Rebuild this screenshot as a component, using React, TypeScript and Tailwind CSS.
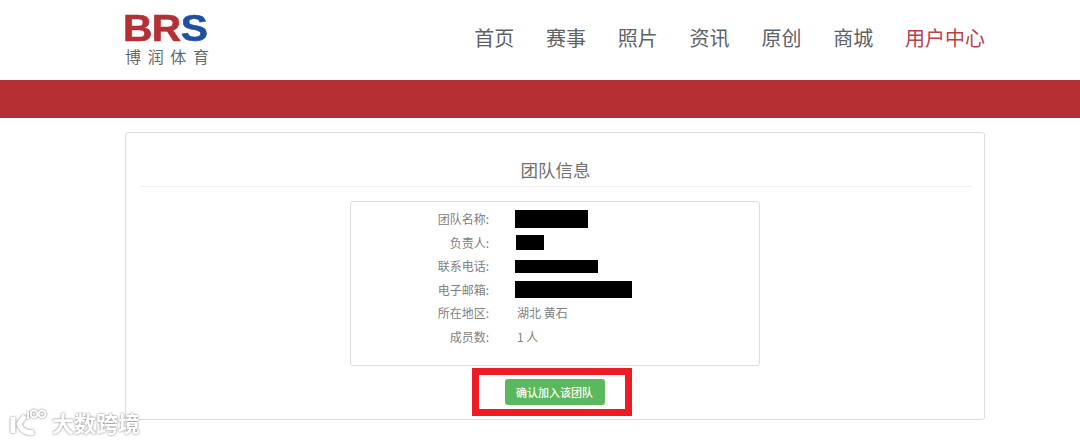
import React from 'react';

const navItems = ['首页', '赛事', '照片', '资讯', '原创', '商城'];

const rows = [
  { label: '团队名称:', block: 'w-[73px] h-[18px] ml-[-2px]' },
  { label: '负责人:', block: 'w-[28px] h-[15px] ml-[-1px]' },
  { label: '联系电话:', block: 'w-[83px] h-[13px] ml-[-2px]' },
  { label: '电子邮箱:', block: 'w-[117px] h-[17px] ml-[-2px]' },
  { label: '所在地区:', text: '湖北 黄石' },
  { label: '成员数:', text: '1 人' },
];

const Logo = () => (
  <div className="w-[90px] pt-[11px] select-none">
    <div className="flex origin-left scale-x-[1.1] ml-[-2px] font-['Liberation_Sans',sans-serif] font-bold text-[37px] leading-[36px] tracking-[-0.5px] [-webkit-text-stroke:0.6px_currentColor]">
      <span className="text-[#b52f35]">BR</span>
      <span className="text-[#1f4f9f]">S</span>
    </div>
    <div className="flex justify-between w-[84px] text-[16px] leading-[18px] text-[#66696c] font-['Noto_Sans_CJK_SC',sans-serif]">
      <span>博</span>
      <span>润</span>
      <span>体</span>
      <span>育</span>
    </div>
  </div>
);

const Watermark = () => (
  <div className="absolute left-[10px] top-[408px] flex items-center gap-[5px] text-white [filter:drop-shadow(0_0_1px_#777)]">
    <svg width="37" height="28" viewBox="0 0 37 28" fill="none" stroke="currentColor">
      <path d="M3 9v16" strokeWidth="5" />
      <path d="M15 8 9 16c2 6 8 10 15 8" strokeWidth="5" />
      <path d="M18 4v7" strokeWidth="2" />
      <circle cx="24" cy="6" r="3.4" strokeWidth="2" />
      <circle cx="32" cy="6" r="3.4" strokeWidth="2" />
    </svg>
    <span className="text-[22px] leading-[28px] font-['Noto_Sans_CJK_SC',sans-serif] font-bold">大数跨境</span>
  </div>
);

export default function App() {
  return (
    <div className="relative h-[443px] w-[1080px] overflow-hidden bg-white font-['Noto_Sans_CJK_SC',sans-serif]">
      {/* Header */}
      <div className="h-[80px] pl-[125px] pr-[95px] flex justify-between">
        <Logo />
        <nav className="flex gap-[31.8px] pt-[23px] text-[20px] leading-[30px] text-[#5c6268]">
          {navItems.map(item => (
            <span key={item}>{item}</span>
          ))}
          <span className="text-[#b5444a]">用户中心</span>
        </nav>
      </div>

      {/* Red band */}
      <div className="h-[38px] bg-[#b72f35]" />

      {/* Card */}
      <div className="relative mt-[14px] ml-[125px] mr-[95px] h-[288px] rounded-[3px] border border-[#ddd] pl-[15px] pr-[13px]">
        <h2 className="pt-[24px] pb-[3px] pr-[1px] h-[54px] border-b border-[#eee] text-center text-[17.5px] leading-[25px] font-normal text-[#707070]">
          团队信息
        </h2>

        <div className="mt-[14px] ml-[209px] w-[410px] h-[165px] rounded-[3px] border border-[#ddd] pt-[5.5px]">
          {rows.map(row => (
            <div key={row.label} className="flex h-[23.5px] items-center text-[12px] text-[#808080]">
              <span className="w-[138px] text-right">{row.label}</span>
              <span className="ml-[28px] flex items-center">
                {row.block ? <span className={`block bg-black ${row.block}`} /> : row.text}
              </span>
            </div>
          ))}
        </div>

        <div className="mt-[13px] ml-[-3px] flex justify-center">
          <button className="w-[100px] h-[26px] rounded-[3px] bg-[#5cb85c] text-[11px] font-medium text-white">
            确认加入该团队
          </button>
        </div>

        {/* Red highlight around the button */}
        <div className="absolute left-[346px] top-[235px] w-[160px] h-[48px] border-[7px] border-[#ed1c24]" />
      </div>

      <Watermark />
    </div>
  );
}
